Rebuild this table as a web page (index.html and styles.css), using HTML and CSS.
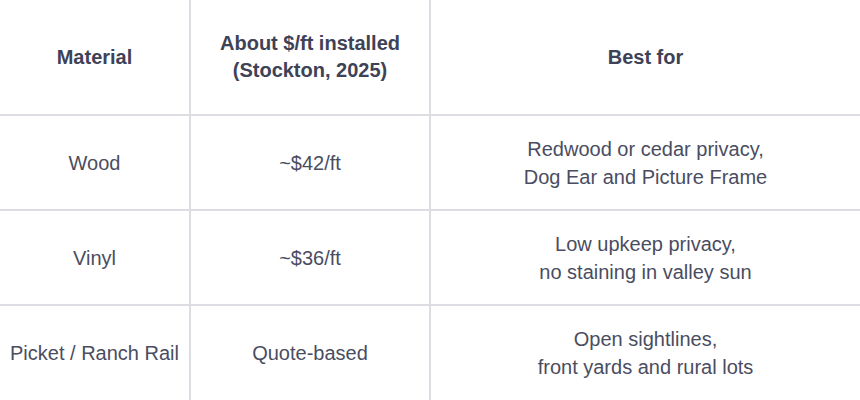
FILE: index.html
```html
<!DOCTYPE html>
<html lang="en">
<head>
<meta charset="utf-8">
<title>Fence materials</title>
<link rel="stylesheet" href="styles.css">
</head>
<body>
<div class="table" role="table">
  <div class="cell head" role="columnheader">Material</div>
  <div class="cell head" role="columnheader">About $/ft installed<br>(Stockton, 2025)</div>
  <div class="cell head" role="columnheader">Best for</div>

  <div class="cell" role="cell">Wood</div>
  <div class="cell" role="cell">~$42/ft</div>
  <div class="cell" role="cell">Redwood or cedar privacy,<br>Dog Ear and Picture Frame</div>

  <div class="cell" role="cell">Vinyl</div>
  <div class="cell" role="cell">~$36/ft</div>
  <div class="cell" role="cell">Low upkeep privacy,<br>no staining in valley sun</div>

  <div class="cell" role="cell">Picket / Ranch Rail</div>
  <div class="cell" role="cell">Quote-based</div>
  <div class="cell" role="cell">Open sightlines,<br>front yards and rural lots</div>
</div>
</body>
</html>
```

FILE: styles.css
```css
html, body {
  margin: 0;
  padding: 0;
  background: #ffffff;
}

body {
  width: 860px;
  height: 400px;
  overflow: hidden;
  font-family: "Liberation Sans", Arial, sans-serif;
}

.table {
  display: grid;
  grid-template-columns: 189px 238px 1fr;
  grid-template-rows: 114px 93px 93px 94px;
  gap: 2px;
  background: #dcdde2;
  width: 860px;
  height: 400px;
}

.cell {
  background: #ffffff;
  display: flex;
  align-items: center;
  justify-content: center;
  text-align: center;
  font-size: 20px;
  line-height: 28px;
  color: #4a4d61;
}

.head {
  font-weight: bold;
  color: #3e4257;
  line-height: 27px;
}
```
